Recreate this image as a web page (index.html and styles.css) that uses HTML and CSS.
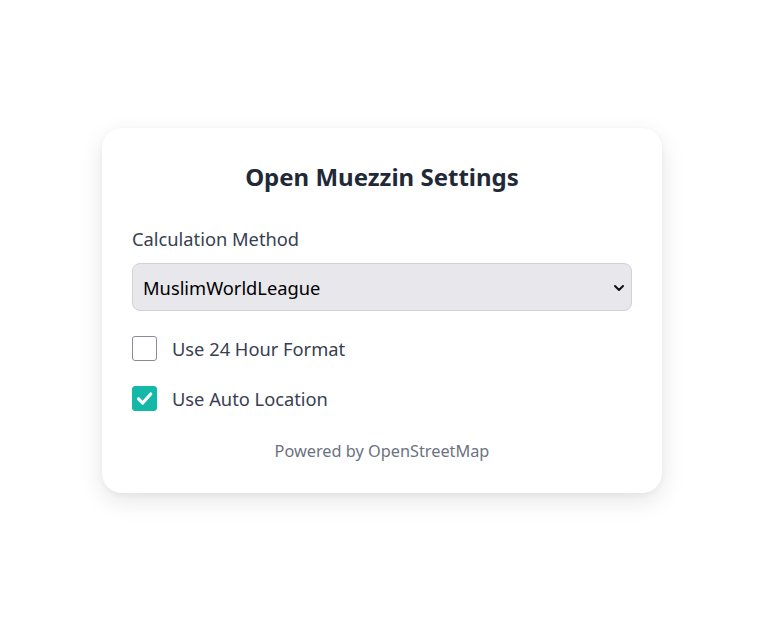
FILE: index.html
```html
<!DOCTYPE html>
<html lang="en">
<head>
<meta charset="utf-8">
<title>Open Muezzin Settings</title>
<link rel="stylesheet" href="styles.css">
</head>
<body>
<main class="page">
  <section class="card">
    <h1 class="title">Open Muezzin Settings</h1>
    <label class="field-label" for="method">Calculation Method</label>
    <div class="select-wrap">
      <select id="method" class="select">
        <option>MuslimWorldLeague</option>
      </select>
      <svg class="chevron" width="12" height="8" viewBox="0 0 12 8"><path d="M2 2l4 4 4-4" fill="none" stroke="#111" stroke-width="2" stroke-linecap="round" stroke-linejoin="round"/></svg>
    </div>
    <label class="check-row">
      <input type="checkbox" class="check">
      <span>Use 24 Hour Format</span>
    </label>
    <label class="check-row">
      <input type="checkbox" class="check" checked>
      <span>Use Auto Location</span>
    </label>
    <p class="footer">Powered by OpenStreetMap</p>
  </section>
</main>
</body>
</html>
```
FILE: styles.css
```css
* { box-sizing: border-box; }
html, body { margin: 0; padding: 0; background: #ffffff; }
body { font-family: "Noto Sans", "Open Sans", sans-serif; color: #374151; }
.page {
  min-height: 638px;
  display: flex;
  justify-content: center;
  align-items: flex-start;
  padding: 128px 9px 0 0;
}
.card {
  width: 560px;
  background: #fff;
  border-radius: 20px;
  box-shadow: 0 8px 24px rgba(0,0,0,0.10), 0 2px 6px rgba(0,0,0,0.04);
  padding: 32px 30px 30px;
  display: flex;
  flex-direction: column;
}
.title {
  margin: 0;
  text-align: center;
  font-size: 24px;
  font-weight: 700;
  color: #1f2937;
  line-height: 34px;
}
.field-label {
  margin-top: 32px;
  font-size: 18.3px;
  line-height: 26px;
  color: #374151;
}
.select-wrap { position: relative; margin-top: 11px; }
.select {
  appearance: none;
  -webkit-appearance: none;
  width: 100%;
  height: 48px;
  background: #e8e7ec;
  border: 1px solid #d1d1d8;
  border-radius: 8px;
  padding: 0 10px;
  font-family: inherit;
  font-size: 18.3px;
  color: #000;
}
.chevron { position: absolute; right: 7px; top: 21px; }
.check-row {
  display: flex;
  align-items: center;
  gap: 15px;
  font-size: 18.3px;
  color: #374151;
  height: 26px;
}
.select-wrap + .check-row { margin-top: 24px; }
.check-row + .check-row { margin-top: 24px; }
.check {
  appearance: none;
  -webkit-appearance: none;
  margin: 0;
  width: 25px;
  height: 25px;
  border: 1px solid #8b8a99;
  border-radius: 3px;
  background: #fff;
  flex: none;
}
.check:checked {
  border-color: #14b8a6;
  background: #14b8a6 url("data:image/svg+xml;utf8,<svg xmlns='http://www.w3.org/2000/svg' viewBox='0 0 25 25'><path d='M6.5 12.8l4.2 4.2 8-9' fill='none' stroke='white' stroke-width='3.2' stroke-linecap='round' stroke-linejoin='round'/></svg>") center/25px no-repeat;
}
.footer {
  margin: 28px 0 0;
  text-align: center;
  font-size: 16.3px;
  color: #6b7280;
  line-height: 24px;
}
```
